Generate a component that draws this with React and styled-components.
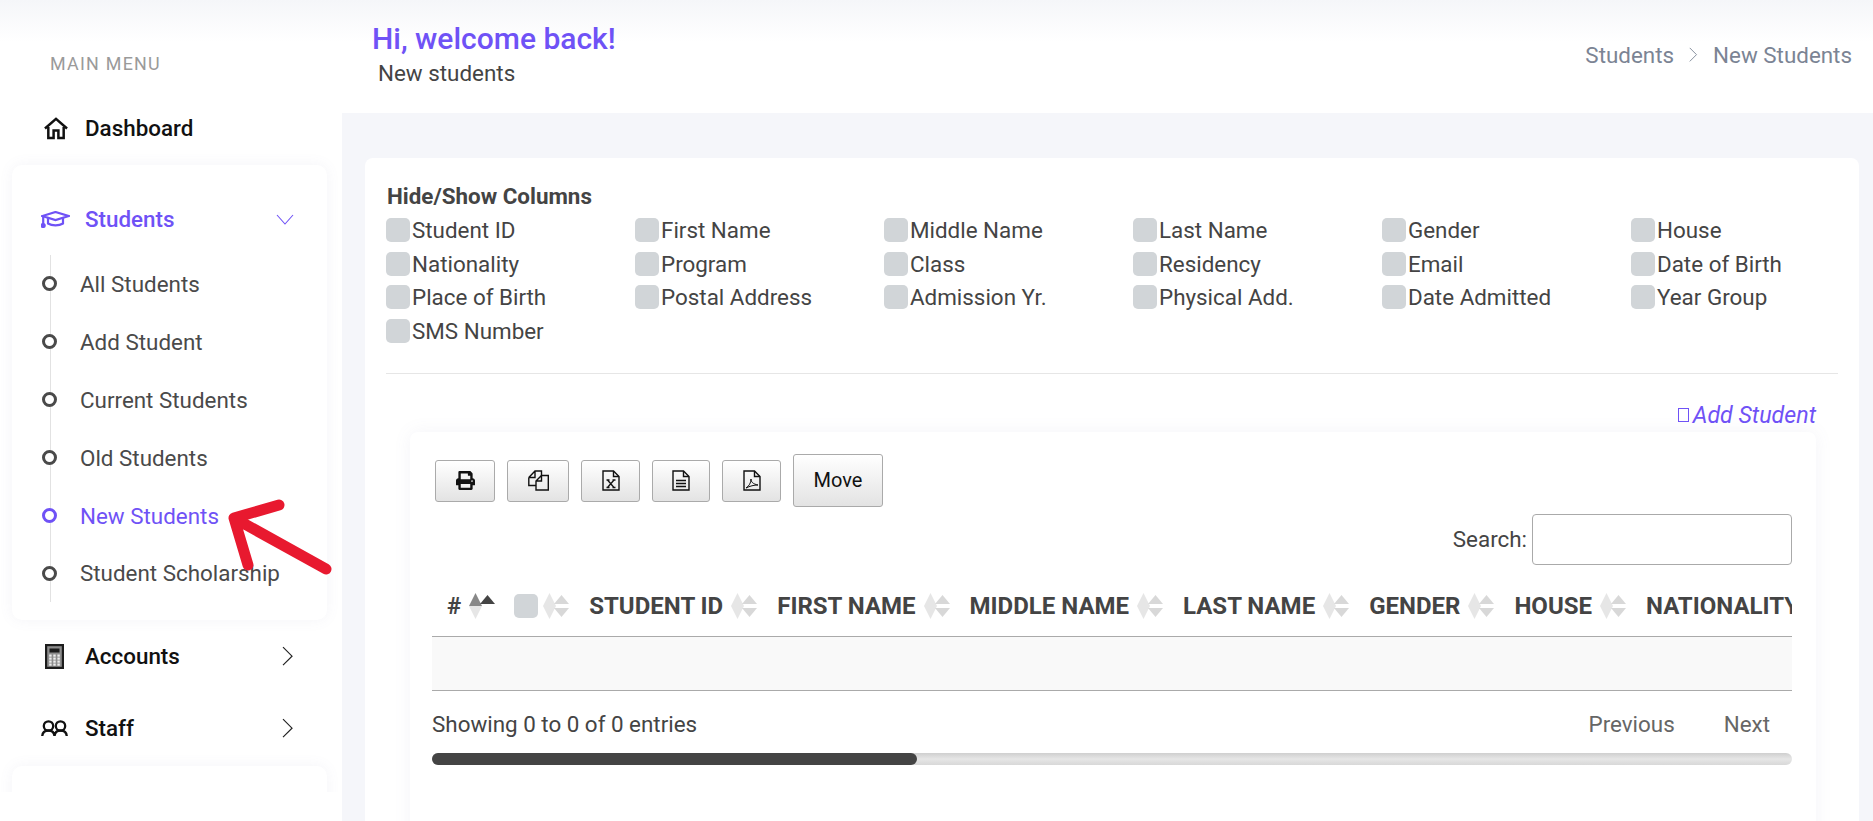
import React from 'react';
import styled, { createGlobalStyle } from 'styled-components';
import { FaPrint } from 'react-icons/fa';

const purple = '#6f52f6';

const Global = createGlobalStyle`
  html, body { margin: 0; padding: 0; height: 821px; overflow: hidden; background: #f5f6fa; }
  body { font-family: Roboto, "Liberation Sans", sans-serif; color: #444; }
  * { box-sizing: border-box; }
`;

const Page = styled.div`
  position: relative;
  display: flex;
  width: 1873px;
  height: 821px;
  overflow: hidden;
`;

const Sidebar = styled.aside`
  width: 342px;
  height: 821px;
  flex: none;
  background: linear-gradient(#f5f6f9 0, #fff 42px);
`;

const MenuScroll = styled.nav`
  height: 792px;
  overflow: hidden;
  padding: 52px 15px 0 12px;
`;

const MenuTitle = styled.div`
  margin-left: 38px;
  font-size: 17.9px;
  line-height: 24px;
  letter-spacing: 1.25px;
  color: #9a9a9a;
`;

const TopItem = styled.div`
  display: flex;
  align-items: center;
  height: ${p => p.$h || 72}px;
  margin-top: ${p => p.$top || 0}px;
  margin-bottom: ${p => p.$bottom || 0}px;
  padding-left: 28px;
  color: ${p => (p.$active ? purple : '#111')};
  font-size: 22.4px;
  font-weight: 500;
`;

const IconSlot = styled.span`
  display: flex;
  align-items: center;
  width: 45px;
  height: ${p => p.$clip || 32}px;
  padding-left: ${p => p.$left || 0}px;
  overflow: hidden;
`;

const ChevronSlot = styled.span`
  display: flex;
  margin-left: auto;
  margin-right: 33px;
`;

const MenuCard = styled.div`
  background: #fff;
  border-radius: 10px;
  box-shadow: 0 0 14px rgba(120, 120, 160, 0.08);
  height: ${p => p.$h}px;
  margin-top: ${p => p.$top || 0}px;
  padding-top: ${p => p.$padTop || 0}px;
`;

const SubList = styled.ul`
  position: relative;
  list-style: none;
  margin: 0;
  padding: 0 0 0 30px;
  &::before {
    content: '';
    position: absolute;
    left: 38px;
    top: 0;
    bottom: 0;
    width: 1px;
    background: #e2e2e2;
  }
`;

const SubItem = styled.li`
  position: relative;
  display: flex;
  align-items: center;
  gap: 23px;
  height: 57.9px;
  font-size: 22.4px;
  color: ${p => (p.$active ? purple : '#4a4a4a')};
`;

const Bullet = styled.span`
  position: relative;
  width: 15px;
  height: 15px;
  border-radius: 50%;
  border: 3px solid currentColor;
  background: #fff;
`;

const Main = styled.main`
  flex: 1;
  min-width: 0;
`;

const Header = styled.header`
  display: flex;
  justify-content: space-between;
  height: 113px;
  padding: 20px 21px 0 30px;
  background: linear-gradient(#f5f6f9 0, #fff 42px);
`;

const Title = styled.h1`
  margin: 0;
  font-size: 30px;
  line-height: 38px;
  font-weight: 500;
  color: ${purple};
`;

const Subtitle = styled.div`
  margin-left: 6px;
  font-size: 22.4px;
  line-height: 30px;
  color: #444;
`;

const Crumbs = styled.div`
  display: flex;
  align-items: center;
  gap: 15px;
  height: 46px;
  margin-top: 12px;
  font-size: 22.4px;
  color: #7b8494;
`;

const Panel = styled.section`
  height: 700px;
  margin: 45px 14px 0 23px;
  padding: 22px 21px 0 22px;
  background: #fff;
  border-radius: 8px;
`;

const ColsTitle = styled.div`
  font-size: 22.4px;
  line-height: 33px;
  font-weight: 700;
`;

const ColsGrid = styled.div`
  display: grid;
  grid-template-columns: repeat(6, 249px);
  grid-auto-rows: 33.7px;
  padding-bottom: 25px;
  margin-left: -1px;
  border-bottom: 1px solid #e6e6e6;
`;

const ColLabel = styled.label`
  display: flex;
  align-items: center;
  gap: 2px;
  font-size: 22.4px;
`;

const Check = styled.span`
  width: 24px;
  height: 24px;
  flex: none;
  border-radius: 5px;
  background: #d1d5d8;
`;

const AddRow = styled.div`
  display: flex;
  justify-content: flex-end;
  align-items: center;
  height: 58px;
  padding: 24px 22px 0 0;
  font-style: italic;
  font-size: 23.2px;
  color: ${purple};
`;

const Tofu = styled.span`
  width: 11px;
  height: 14px;
  margin-right: 4px;
  border: 1px solid ${purple};
`;

const TableCard = styled.div`
  height: 420px;
  margin: 0 22px 0 23px;
  padding: 22px 24px 0 22px;
  background: #fff;
  border-radius: 8px;
  box-shadow: 0 0 18px rgba(120, 120, 160, 0.08);
`;

const Toolbar = styled.div`
  display: flex;
  align-items: flex-end;
  gap: 12px;
  height: 53px;
  padding-left: 3px;
`;

const ToolBtn = styled.button`
  display: flex;
  align-items: center;
  justify-content: center;
  width: ${p => p.$w}px;
  height: ${p => p.$h || 42}px;
  margin-bottom: ${p => p.$mb ?? 5}px;
  padding: 0;
  font: 20px Roboto, sans-serif;
  color: #111;
  border: 1px solid #aaa;
  border-radius: 3px;
  background: linear-gradient(#fff, #e3e3e3);
`;

const SearchRow = styled.div`
  display: flex;
  justify-content: flex-end;
  align-items: center;
  gap: 5px;
  margin-top: 7px;
  font-size: 22.4px;
`;

const SearchInput = styled.input`
  width: 260px;
  height: 51px;
  border: 1px solid #aaa;
  border-radius: 4px;
  background: #fff;
`;

const TableWrap = styled.div`
  overflow: hidden;
  margin-top: 10px;
`;

const Table = styled.table`
  border-collapse: collapse;
  white-space: nowrap;
`;

const Th = styled.th`
  height: 62px;
  padding: 1px 0 0 ${p => p.$left || 20}px;
  border-bottom: 1px solid #aaa;
  font-size: 24px;
  font-weight: 700;
  color: #444;
  text-align: left;
`;

const ThInner = styled.span`
  display: flex;
  align-items: center;
  gap: ${p => p.$gap || 8}px;
`;

const EmptyRow = styled.div`
  height: 55px;
  margin-top: -1px;
  background: #f9f9f9;
  border-top: 1px solid #aaa;
  border-bottom: 1px solid #aaa;
`;

const Foot = styled.div`
  display: flex;
  justify-content: space-between;
  align-items: center;
  height: 62px;
  padding-top: 4px;
  font-size: 22.4px;
`;

const Pager = styled.div`
  display: flex;
  gap: 49px;
  padding-right: 22px;
  color: #666;
`;

const Track = styled.div`
  height: 12px;
  border-radius: 6px;
  background: linear-gradient(#cfcfcf, #e6e6e6 50%, #d8d8d8);
`;

const Thumb = styled.div`
  height: 12px;
  border-radius: 6px;
  background: #444;
  width: ${p => p.$w}px;
`;

const Arrow = styled.svg`
  position: absolute;
  left: 0;
  top: 0;
  pointer-events: none;
`;

const HomeIcon = () => (
  <svg width="24" height="23" viewBox="0 0 25 23" fill="none" stroke="#111" strokeWidth="2.600">
    <path d="M1 11.500L12.500 1.500L24 11.500" />
    <path d="M4.500 10v11.500h5.500v-8h5v8h5.500V10" />
  </svg>
);

const CapIcon = () => (
  <svg width="29" height="17" viewBox="0 0 29 17" fill="none" stroke={purple} strokeWidth="2.200">
    <path d="M1.500 5L14.500 1L27.500 5L14.500 9z" />
    <path d="M7 7v5.500c4 2.500 11 2.500 15 0V7" />
    <path d="M2.200 5v9" />
    <circle cx="2.200" cy="14.500" r="1.500" fill={purple} />
  </svg>
);

const CalcIcon = () => (
  <svg width="19" height="25" viewBox="0 0 19 25">
    <rect width="19" height="25" fill="#1c1c1c" />
    <rect x="2.200" y="2.200" width="14.600" height="20.600" fill="#8d8d8d" />
    <rect x="4.500" y="4.500" width="10" height="4" fill="#1c1c1c" />
    {[10.500, 13.500, 16.500, 19.500].flatMap(y => [4.200, 8.300, 12.400].map(x => (
      <rect key={`${x}-${y}`} x={x} y={y} width="2.400" height="2.200" fill="#eee" />
    )))}
  </svg>
);

const StaffIcon = () => (
  <svg width="27" height="17" viewBox="0 0 27 17" fill="none" stroke="#111" strokeWidth="2.300">
    <circle cx="7.500" cy="6" r="4.700" />
    <circle cx="19.500" cy="6" r="4.700" />
    <path d="M1.200 17c0-4.500 2.500-6.500 6.300-6.500s6 2 6 6.500c0-4.500 2.200-6.500 6-6.500s6.300 2 6.300 6.500" />
  </svg>
);

const ChevronRight = ({ color = '#222', size = 12 }) => (
  <svg width={size} height={size * 1.7} viewBox="0 0 12 20" fill="none" stroke={color} strokeWidth="1.2">
    <path d="M1 1l9 9-9 9" />
  </svg>
);

const ChevronDown = () => (
  <svg width="18" height="11" viewBox="0 0 18 11" fill="none" stroke={purple} strokeWidth="1.1">
    <path d="M1 1l8 9 8-9" />
  </svg>
);

const SortIcon = ({ active }) => (
  <svg width="26" height="26" viewBox="0 0 26 26">
    <polygon points="6.500,0 13,13 0,13" fill={active ? '#888' : '#e6e6e6'} />
    <polygon points="6.500,26 13,13 0,13" fill="#e6e6e6" />
    <polygon points="18.500,2 26,11 11,11" fill={active ? '#444' : '#d8d8d8'} />
    {!active && <polygon points="18.500,24 26,15 11,15" fill="#d8d8d8" />}
  </svg>
);

const FileIcon = ({ children }) => (
  <svg width="18" height="21" viewBox="0 0 18 21" fill="none" stroke="#111" strokeWidth="1.400">
    <path d="M1 1h10.500l5.500 5.500V20H1z" />
    <path d="M11.500 1v5.500H17" />
    {children}
  </svg>
);

const CopyIcon = () => (
  <svg width="21" height="21" viewBox="0 0 21 21" fill="none" stroke="#111" strokeWidth="1.400">
    <path d="M0.800 7.500L7 1h6.500v5M0.800 7.500V15.500H8M0.800 7.500H7V1" />
    <path d="M8 11l5.500-5.500h6.800V20H8zM8 11h5.500V5.500" />
  </svg>
);

const students = ['All Students', 'Add Student', 'Current Students', 'Old Students', 'New Students', 'Student Scholarship'];
const columns = [
  'Student ID', 'First Name', 'Middle Name', 'Last Name', 'Gender', 'House',
  'Nationality', 'Program', 'Class', 'Residency', 'Email', 'Date of Birth',
  'Place of Birth', 'Postal Address', 'Admission Yr.', 'Physical Add.', 'Date Admitted', 'Year Group',
  'SMS Number',
];
const heads = ['STUDENT ID', 'FIRST NAME', 'MIDDLE NAME', 'LAST NAME', 'GENDER', 'HOUSE', 'NATIONALITY'];

export default function App() {
  return (
    <Page>
      <Global />
      <Sidebar>
        <MenuScroll>
          <MenuTitle>MAIN MENU</MenuTitle>
          <TopItem $h={64} $top={20} $bottom={5}>
            <IconSlot $left={4}><HomeIcon /></IconSlot>Dashboard
          </TopItem>
          <MenuCard $h={455} $padTop={18}>
            <TopItem $active>
              <IconSlot $left={1}><CapIcon /></IconSlot>Students
              <ChevronSlot><ChevronDown /></ChevronSlot>
            </TopItem>
            <SubList>
              {students.map(s => (
                <SubItem key={s} $active={s === 'New Students'}><Bullet />{s}</SubItem>
              ))}
            </SubList>
          </MenuCard>
          <TopItem>
            <IconSlot $left={5}><CalcIcon /></IconSlot>Accounts
            <ChevronSlot><ChevronRight /></ChevronSlot>
          </TopItem>
          <TopItem>
            <IconSlot $left={1} $clip={16}><StaffIcon /></IconSlot>Staff
            <ChevronSlot><ChevronRight /></ChevronSlot>
          </TopItem>
          <MenuCard $h={60} $top={2} />
        </MenuScroll>
      </Sidebar>
      <Main>
        <Header>
          <div>
            <Title>Hi, welcome back!</Title>
            <Subtitle>New students</Subtitle>
          </div>
          <Crumbs>Students <ChevronRight color="#7b8494" size={9} /> New Students</Crumbs>
        </Header>
        <Panel>
          <ColsTitle>Hide/Show Columns</ColsTitle>
          <ColsGrid>
            {columns.map(c => (
              <ColLabel key={c}><Check />{c}</ColLabel>
            ))}
          </ColsGrid>
          <AddRow><Tofu />Add Student</AddRow>
          <TableCard>
            <Toolbar>
              <ToolBtn $w={60}><FaPrint size={19} /></ToolBtn>
              <ToolBtn $w={62}><CopyIcon /></ToolBtn>
              <ToolBtn $w={59}>
                <FileIcon><path d="M5.500 10l6.500 7.500M12 10l-6.500 7.500M4.500 10h3M10.500 10h3M4.500 17.500h3M10.500 17.500h3" strokeWidth="1.300" /></FileIcon>
              </ToolBtn>
              <ToolBtn $w={58}>
                <FileIcon><path d="M4 10.500h10M4 13.500h10M4 16.500h10" strokeWidth="1.600" /></FileIcon>
              </ToolBtn>
              <ToolBtn $w={59}>
                <FileIcon><path d="M3 18c3-2 5-5 5-9 0 3 2 5 7 6-4 0-8 1-12 3z" strokeWidth="1" /></FileIcon>
              </ToolBtn>
              <ToolBtn $w={90} $h={53} $mb={0}>Move</ToolBtn>
            </Toolbar>
            <SearchRow>Search:<SearchInput /></SearchRow>
            <TableWrap>
              <Table>
                <thead>
                  <tr>
                    <Th $left={15}><ThInner>#<SortIcon active /></ThInner></Th>
                    <Th $left={19}><ThInner $gap={5}><Check /><SortIcon /></ThInner></Th>
                    {heads.map(h => (
                      <Th key={h}><ThInner>{h}<SortIcon /></ThInner></Th>
                    ))}
                  </tr>
                </thead>
              </Table>
            </TableWrap>
            <EmptyRow />
            <Foot>
              Showing 0 to 0 of 0 entries
              <Pager><span>Previous</span><span>Next</span></Pager>
            </Foot>
            <Track><Thumb $w={485} /></Track>
          </TableCard>
        </Panel>
      </Main>
      <Arrow width="340" height="580" viewBox="0 0 340 580" fill="none" stroke="#e8192f" strokeWidth="11" strokeLinecap="round" strokeLinejoin="round">
        <path d="M279 505L234 518L248 565M234 518L326 569" />
      </Arrow>
    </Page>
  );
}
